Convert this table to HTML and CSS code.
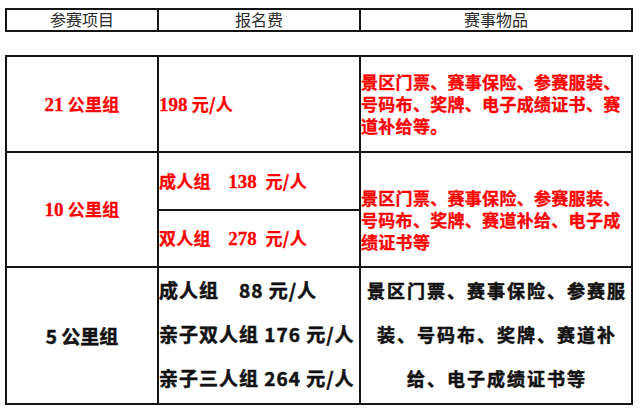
FILE: index.html
```html
<!DOCTYPE html>
<html lang="zh-CN">
<head>
<meta charset="utf-8">
<title>参赛项目</title>
<link rel="stylesheet" href="styles.css">
</head>
<body>
<div class="wrap">
  <table class="grid head">
    <colgroup><col class="c1"><col class="c2"><col class="c3"></colgroup>
    <tr>
      <th>参赛项目</th>
      <th>报名费</th>
      <th>赛事物品</th>
    </tr>
  </table>

  <table class="grid body">
    <colgroup><col class="c1"><col class="c2"><col class="c3"></colgroup>
    <tr class="r1">
      <td class="name red"><span class="num">21</span> 公里组</td>
      <td class="fee red"><span class="num">198</span> 元/人</td>
      <td class="items red">景区门票、赛事保险、参赛服装、号码布、奖牌、电子成绩证书、赛道补给等。</td>
    </tr>
    <tr class="r2a">
      <td class="name red" rowspan="2"><span class="num">10</span> 公里组</td>
      <td class="fee red">成人组&emsp;<span class="num">138</span>&ensp;元/人</td>
      <td class="items red low" rowspan="2">景区门票、赛事保险、参赛服装、号码布、奖牌、赛道补给、电子成绩证书等</td>
    </tr>
    <tr class="r2b">
      <td class="fee red">双人组&emsp;<span class="num">278</span>&ensp;元/人</td>
    </tr>
    <tr class="r3">
      <td class="name black">5 公里组</td>
      <td class="fee black">
        <div class="ln">成人组&emsp;88 元/人</div>
        <div class="ln">亲子双人组 176 元/人</div>
        <div class="ln">亲子三人组 264 元/人</div>
      </td>
      <td class="items black big">景区门票、赛事保险、参赛服装、号码布、奖牌、赛道补给、电子成绩证书等</td>
    </tr>
  </table>
</div>
</body>
</html>
```

FILE: styles.css
```css
html, body {
  margin: 0;
  padding: 0;
  background: #ffffff;
}

.wrap {
  padding: 8px 0 0 5px;
}

.grid {
  border-collapse: separate;
  border-spacing: 0;
  table-layout: fixed;
  width: 628px;
  border-left: 2px solid #151515;
  border-top: 2px solid #151515;
}

.grid th,
.grid td {
  border-right: 2px solid #151515;
  border-bottom: 2px solid #151515;
  padding: 0;
  box-sizing: border-box;
}

.c1 { width: 152px; }
.c2 { width: 202px; }
.c3 { width: 272px; }

.head th {
  height: 22px;
  font-family: "Noto Sans CJK SC", sans-serif;
  font-weight: 400;
  font-size: 16px;
  line-height: 19px;
  color: #2a2a2a;
  text-align: center;
  vertical-align: top;
}

.body {
  margin-top: 23px;
}

.r1 td { height: 96px; }
.r2a td { height: 58px; }
.r2b td { height: 57px; }
.r3 td { height: 136px; }

.red {
  color: #ff0000;
  font-family: "Noto Sans CJK SC", sans-serif;
  font-weight: 700;
  font-size: 17px;
  letter-spacing: 0.3px;
  line-height: 22px;
  -webkit-text-stroke: 0.3px #ff0000;
}

.num {
  font-family: "Liberation Serif", serif;
  font-weight: 700;
  font-size: 19px;
  letter-spacing: 0;
}

.black {
  color: #111111;
  font-family: "Noto Sans CJK SC", sans-serif;
  font-weight: 700;
  font-size: 19px;
  -webkit-text-stroke: 0.5px #111111;
}

.name {
  text-align: center;
  vertical-align: middle;
}

.fee {
  text-align: left;
  vertical-align: middle;
  padding-left: 1px;
  white-space: nowrap;
}

.fee.black {
  letter-spacing: 1px;
}

.ln {
  line-height: 44px;
}

.r3 .fee {
  padding-bottom: 3px;
}

.items {
  text-align: left;
  vertical-align: middle;
  padding-left: 1px;
}

.items.low {
  padding-top: 21px;
}

.items.big {
  font-size: 18px;
  letter-spacing: 2px;
  line-height: 44px;
  text-align: center;
  padding: 0 0 3px 2px;
}
```
